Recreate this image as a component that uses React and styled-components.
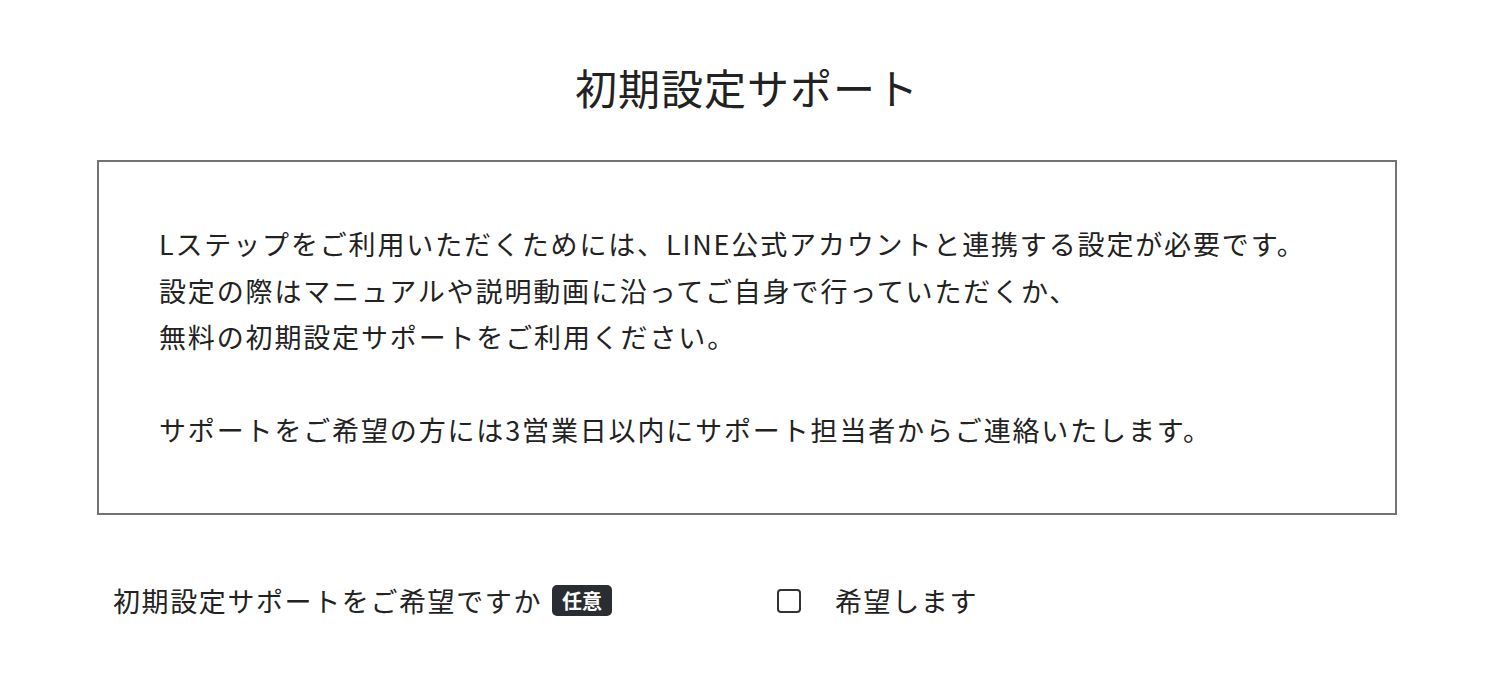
import styled, { createGlobalStyle } from 'styled-components';

const GlobalStyle = createGlobalStyle`
  body {
    margin: 0;
    background: #fff;
    font-family: "Noto Sans CJK JP", "Noto Sans", sans-serif;
    color: #222;
  }
`;

const Page = styled.main`
  width: 1300px;
  margin: 0 auto;
  padding-top: 56px;
`;

const Title = styled.h1`
  margin: 0 0 42px;
  font-size: 42px;
  font-weight: 400;
  line-height: 62px;
  text-align: center;
  letter-spacing: 1px;
  color: #222;
`;

const NoticeBox = styled.section`
  border: 2px solid #737373;
  padding: 59px 60px;
`;

const Paragraph = styled.p`
  margin: 0;
  font-size: 27px;
  line-height: 46.5px;
  letter-spacing: 1.85px;
  color: #222;

  & + & {
    margin-top: 46.5px;
  }
`;

const FieldRow = styled.div`
  display: flex;
  align-items: center;
  margin-top: 66px;
  padding-left: 16px;
  height: 40px;
`;

const FieldLabel = styled.div`
  display: flex;
  align-items: center;
  width: 664px;
  font-size: 27px;
  letter-spacing: 1.6px;
`;

const Badge = styled.span`
  display: inline-flex;
  align-items: center;
  justify-content: center;
  margin-left: 10px;
  width: 60px;
  height: 31px;
  border-radius: 5px;
  background: #2a2e33;
  color: #fff;
  font-size: 20px;
  font-weight: 700;
  letter-spacing: 0;
`;

const CheckLabel = styled.label`
  display: flex;
  align-items: center;
  font-size: 27px;
  letter-spacing: 1.6px;
  cursor: pointer;
`;

const CheckBox = styled.span`
  display: inline-block;
  width: 24px;
  height: 24px;
  box-sizing: border-box;
  border: 2px solid #333;
  border-radius: 4px;
  margin-right: 34px;
`;

export default function App() {
  return (
    <>
      <GlobalStyle />
      <Page>
        <Title>初期設定サポート</Title>
        <NoticeBox>
          <Paragraph>
            Lステップをご利用いただくためには、LINE公式アカウントと連携する設定が必要です。
            <br />
            設定の際はマニュアルや説明動画に沿ってご自身で行っていただくか、
            <br />
            無料の初期設定サポートをご利用ください。
          </Paragraph>
          <Paragraph>
            サポートをご希望の方には3営業日以内にサポート担当者からご連絡いたします。
          </Paragraph>
        </NoticeBox>
        <FieldRow>
          <FieldLabel>
            初期設定サポートをご希望ですか
            <Badge>任意</Badge>
          </FieldLabel>
          <CheckLabel>
            <CheckBox />
            希望します
          </CheckLabel>
        </FieldRow>
      </Page>
    </>
  );
}
